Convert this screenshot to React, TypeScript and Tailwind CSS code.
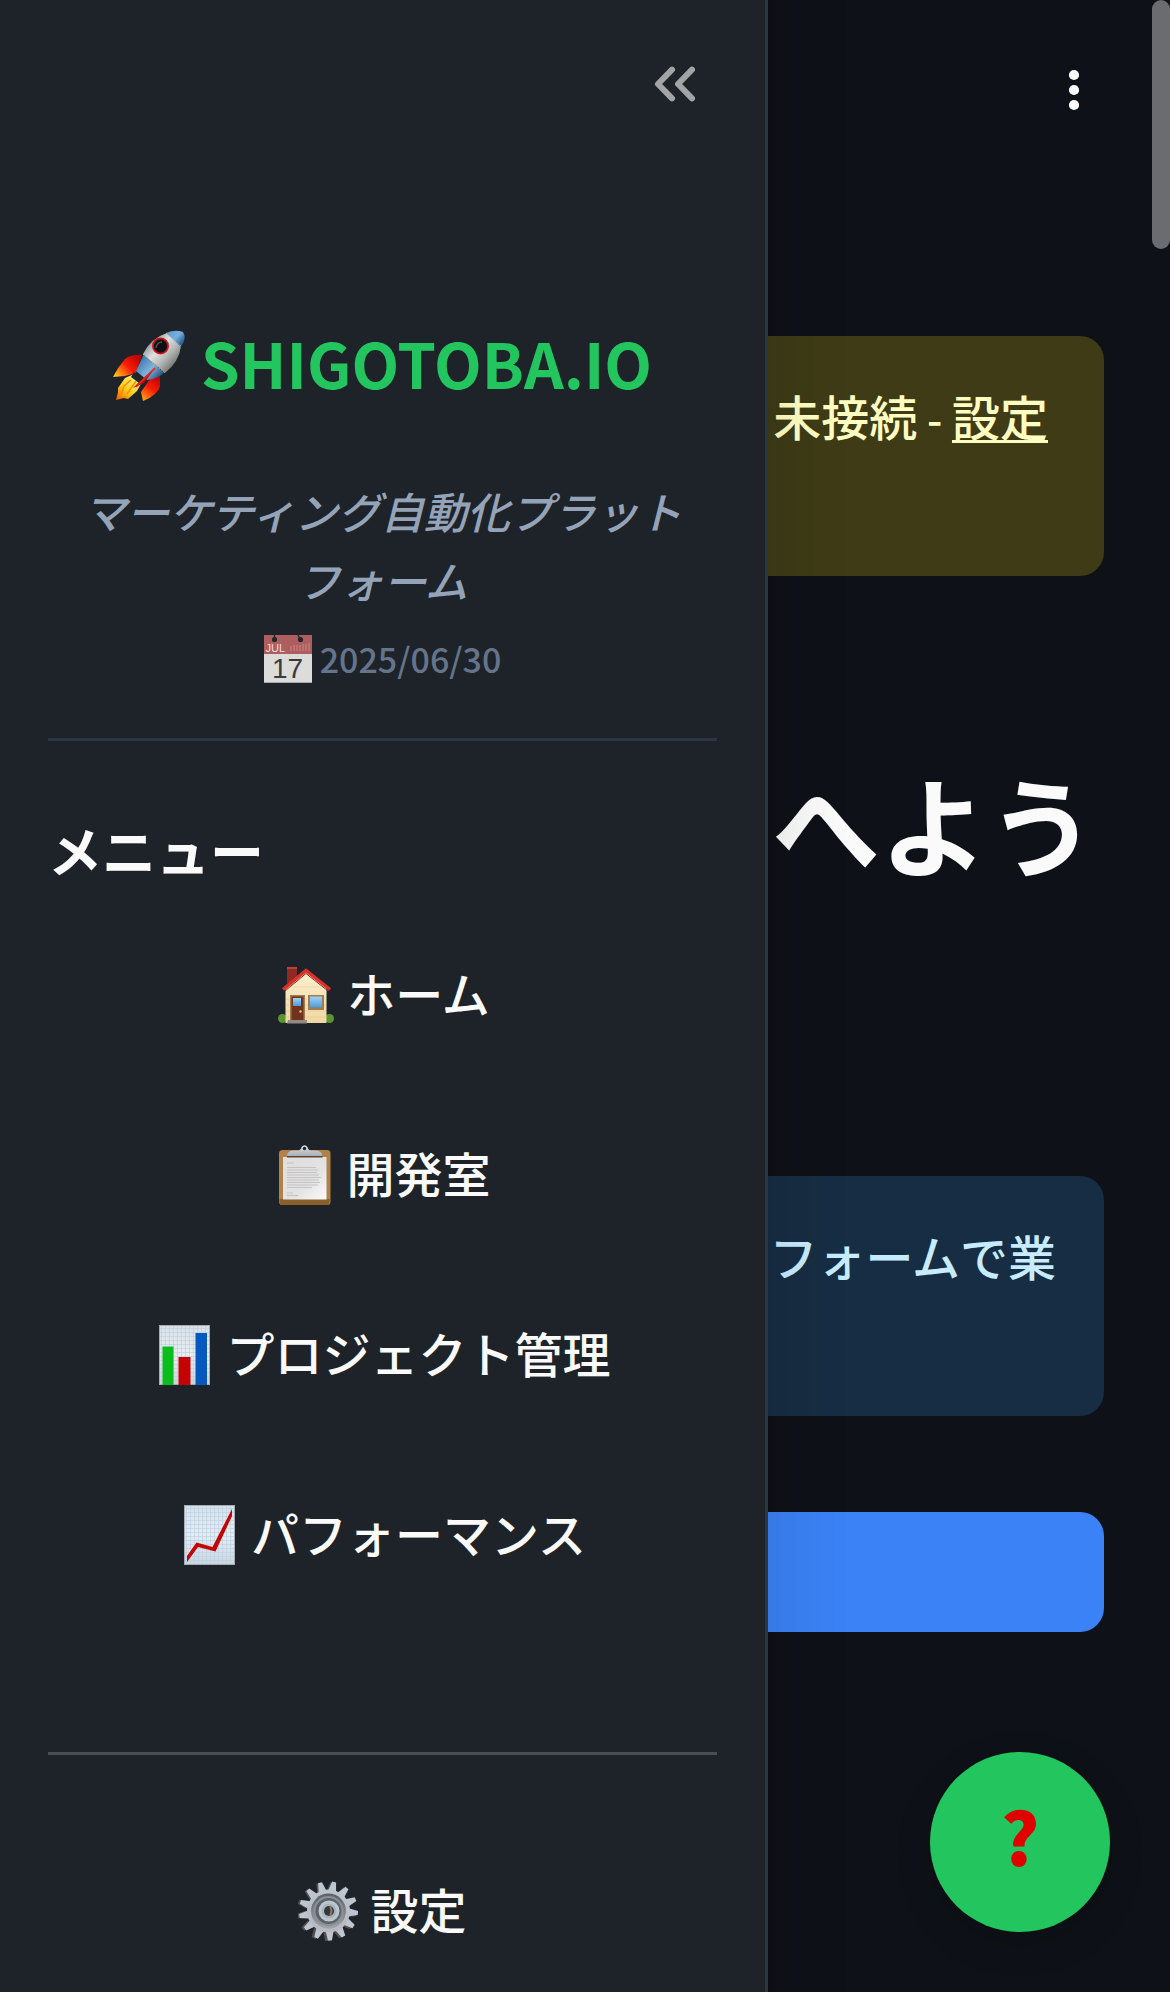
import React from "react";

function CollapseIcon() {
  return (
    <svg width="48" height="48" viewBox="0 0 48 48" fill="none" stroke="#a3a4a6" strokeWidth="6" strokeLinecap="round" strokeLinejoin="round" aria-hidden="true">
      <path d="M21 9.600 7 24l14 14.400M41 9.600 27 24l14 14.400" />
    </svg>
  );
}

function DotsIcon() {
  return (
    <svg width="48" height="48" viewBox="0 0 48 48" fill="#ffffff" aria-hidden="true">
      <circle cx="24" cy="9" r="5.1" />
      <circle cx="24" cy="24" r="5.1" />
      <circle cx="24" cy="39" r="5.1" />
    </svg>
  );
}

function RocketIcon() {
  return (
    <svg className="shrink-0" width="72" height="72" viewBox="0 0 72 72" aria-hidden="true">
      <defs>
        <linearGradient id="rk-body" x1="30" y1="18" x2="56" y2="42" gradientUnits="userSpaceOnUse">
          <stop offset="0" stopColor="#8c9296" />
          <stop offset=".35" stopColor="#dfe2e0" />
          <stop offset=".65" stopColor="#b5b9b8" />
          <stop offset="1" stopColor="#6f7370" />
        </linearGradient>
        <linearGradient id="rk-nose" x1="54" y1="2" x2="70" y2="16" gradientUnits="userSpaceOnUse">
          <stop offset="0" stopColor="#5f9bd0" />
          <stop offset=".5" stopColor="#77b0df" />
          <stop offset="1" stopColor="#15427a" />
        </linearGradient>
        <linearGradient id="rk-belly" x1="26" y1="30" x2="48" y2="50" gradientUnits="userSpaceOnUse">
          <stop offset="0" stopColor="#3d78ad" />
          <stop offset=".5" stopColor="#7fb4dd" />
          <stop offset="1" stopColor="#163d69" />
        </linearGradient>
        <linearGradient id="rk-fin" x1="26" y1="26" x2="4" y2="47" gradientUnits="userSpaceOnUse">
          <stop offset="0" stopColor="#b80000" />
          <stop offset=".5" stopColor="#fb1b05" />
          <stop offset="1" stopColor="#ffc31e" />
        </linearGradient>
        <linearGradient id="rk-fin2" x1="46" y1="46" x2="28" y2="70" gradientUnits="userSpaceOnUse">
          <stop offset="0" stopColor="#b80000" />
          <stop offset=".5" stopColor="#fb1b05" />
          <stop offset="1" stopColor="#ffb01e" />
        </linearGradient>
        <linearGradient id="rk-fire" x1="26" y1="46" x2="4" y2="70" gradientUnits="userSpaceOnUse">
          <stop offset="0" stopColor="#fff29a" />
          <stop offset=".55" stopColor="#ffd21c" />
          <stop offset="1" stopColor="#f05a00" />
        </linearGradient>
      </defs>
      <path d="M29 25q-10-1-17 4Q5 37 0 47l12-1 11-3z" fill="url(#rk-fin)" />
      <path d="m47 46 0 10q-2 9-17 15l-2-9 9-13z" fill="url(#rk-fin2)" />
      <path d="m21 44-9 4-7 10 0 4-2 8 8-2 4 1 9-8 6-11z" fill="url(#rk-fire)" />
      <path d="m18 50-7 6-3 9m15-14-9 13" stroke="#ff8a00" strokeWidth="1.4" fill="none" />
      <path d="m21 42 11 9-6 2-8-6z" fill="#22262b" />
      <path d="M31 24 23 41l11 9q10-1 17-7z" fill="url(#rk-belly)" />
      <path d="M30 24q8-16 24-21l14 13q-2 16-16 27z" fill="url(#rk-body)" />
      <path d="M53 3q9-4 17-1 4 6-2 15z" fill="url(#rk-nose)" />
      <path d="m30 24 22 19M53 3l15 13" stroke="#c9b880" strokeWidth="1" strokeDasharray="1.5 1.5" />
      <path d="M42 38 28 50l-8 8 11-5z" fill="#bd0803" />
      <path d="m42 38-9 9-10 10" stroke="#e8271b" strokeWidth="1.600" fill="none" />
      <circle cx="47.500" cy="16" r="8.500" fill="#d8101a" />
      <circle cx="47.500" cy="16" r="6.700" fill="#0c1013" />
      <path d="M43 18q1-6 6-6" stroke="#4c575c" strokeWidth="1.400" fill="none" />
    </svg>
  );
}

function CalendarIcon() {
  return (
    <svg className="shrink-0" width="48" height="48" viewBox="0 0 48 48" aria-hidden="true">
      <rect width="48" height="48" fill="#dcdcdb" />
      <rect width="48" height="19" fill="#ae5e5e" />
      <path d="M27 11v5m3-6v6m3-6v6m3-6v6m3-7v7m3-7v7m3-8v8" stroke="#c98583" strokeWidth="1" />
      <circle cx="10.500" cy="4.500" r="2.600" fill="#25262a" />
      <circle cx="36.500" cy="4.500" r="2.600" fill="#25262a" />
      <path d="M10.500 0v4M34 0l2 4" stroke="#25262a" strokeWidth="1.400" />
      <text x="1.500" y="16.500" fontSize="11" fill="#f3dede" fontFamily="Liberation Sans, sans-serif">JUL</text>
      <text x="23.500" y="43" fontSize="28" textAnchor="middle" fill="#393b3d" fontFamily="Liberation Sans, sans-serif">17</text>
      <path d="M0 47.500h48" stroke="#a9abaa" />
    </svg>
  );
}

function HomeIcon() {
  return (
    <svg className="shrink-0" width="60" height="60" viewBox="0 0 60 60" aria-hidden="true">
      <defs>
        <linearGradient id="hm-wall" x1="0" y1="0" x2="0" y2="1">
          <stop offset="0" stopColor="#fdf0ce" />
          <stop offset="1" stopColor="#efd7a2" />
        </linearGradient>
        <linearGradient id="hm-glass" x1="0" y1="0" x2="0" y2="1">
          <stop offset="0" stopColor="#9fd3f5" />
          <stop offset="1" stopColor="#4f9cd8" />
        </linearGradient>
      </defs>
      <path d="M12 2h10v10L12 19z" fill="#8e2a24" />
      <path d="M12 2h10v2H12z" fill="#b84138" />
      <circle cx="7.500" cy="53.500" r="4.500" fill="#5c9431" />
      <circle cx="54.500" cy="53.500" r="4.500" fill="#5c9431" />
      <path d="M10.500 22 31 6l20.500 16v36h-41z" fill="url(#hm-wall)" />
      <path d="M11 34h40M11 40h40M11 46h40M11 52h40M18 22h26" stroke="#e3cb97" strokeWidth=".6" />
      <path d="M8 24.500 31 5.500l24 19" stroke="#d8312b" strokeWidth="3.500" fill="none" />
      <path d="M10 26 31 8.500 53 26" stroke="#8d2320" strokeWidth="1" fill="none" />
      <path d="M15 30h15v26H15z" fill="#a07b53" />
      <path d="M16.500 31.500h12V56h-12z" fill="#713220" />
      <path d="M18 33h8v8h-8z" fill="url(#hm-glass)" />
      <circle cx="25.500" cy="46.500" r="1.200" fill="#f0c64a" />
      <path d="M33 30h16v15H33z" fill="#a07b53" />
      <path d="M35 31.500h12v11H35z" fill="url(#hm-glass)" />
      <path d="M13 55h19v3.500H12z" fill="#928b83" />
    </svg>
  );
}

function ClipboardIcon() {
  return (
    <svg className="shrink-0" width="60" height="60" viewBox="0 0 60 60" aria-hidden="true">
      <defs>
        <linearGradient id="cb-paper" x1="0" y1="0" x2="1" y2="1">
          <stop offset="0" stopColor="#dedede" />
          <stop offset=".6" stopColor="#e3e3e3" />
          <stop offset="1" stopColor="#fbfbfb" />
        </linearGradient>
        <linearGradient id="cb-clip" x1="0" y1="0" x2="0" y2="1">
          <stop offset="0" stopColor="#dbe0e5" />
          <stop offset="1" stopColor="#a9afb5" />
        </linearGradient>
      </defs>
      <rect x="5" y="5" width="51.500" height="55" rx="3.500" fill="#b0824a" />
      <path d="M5.500 54h50v3q0 3-3 3h-44q-3 0-3-3z" fill="#8a5f2b" />
      <path d="M9 12h43.500v42.500H9z" fill="url(#cb-paper)" />
      <path d="M13 18h7M13 22.500h29M13 25h31M13 27.500h30M13 30h32M13 32.500h34M13 35h32M13 37.500h33M13 40h31M13 42.500h25M13 48h6M13 50.500h11" stroke="#c2c2c2" strokeWidth="1" />
      <path d="M13 10.500h35.500v2H13z" fill="#5a4736" />
      <path d="M13 11q0-5 6-5.500h6q2-1 2.500-3.500 3-3.500 6 0 .5 2.500 2.500 3.500h6q6 .5 6.500 5.500z" fill="url(#cb-clip)" />
      <circle cx="30.500" cy="3.500" r="1.700" fill="#1e2329" />
    </svg>
  );
}

function ChartPaper({ id, children }: { id: string; children: React.ReactNode }) {
  return (
    <svg className="shrink-0" width="60" height="60" viewBox="0 0 60 60" aria-hidden="true">
      <defs>
        <linearGradient id={id} x1="0" y1="0" x2="0" y2="1">
          <stop offset="0" stopColor="#d9e1e6" />
          <stop offset=".5" stopColor="#e9edf0" />
          <stop offset="1" stopColor="#cdd4d9" />
        </linearGradient>
      </defs>
      <rect x="5" width="51" height="60" fill={`url(#${id})`} />
      <path d="M7.500 0v60M11.500 0v60M15.500 0v60M19.500 0v60M23.500 0v60M27.500 0v60M31.500 0v60M35.500 0v60M39.500 0v60M43.500 0v60M47.500 0v60M51.500 0v60M5 3.500h51M5 7.500h51M5 11.500h51M5 15.500h51M5 19.500h51M5 23.500h51M5 27.500h51M5 31.500h51M5 35.500h51M5 39.500h51M5 43.500h51M5 47.500h51M5 51.500h51M5 55.500h51" stroke="#b9d2e6" strokeWidth=".7" />
      <rect x="5.500" y=".5" width="50" height="59" fill="none" stroke="#a5adb3" />
      {children}
    </svg>
  );
}

function BarChartIcon() {
  return (
    <ChartPaper id="bar-paper">
      <path d="M8.500 21.500h11V60h-11z" fill="#08bd1c" />
      <path d="M24.500 32h12v28h-12z" fill="#c40404" />
      <path d="M41.500 8h11.500v52H41.500z" fill="#0758bd" />
    </ChartPaper>
  );
}

function TrendIcon() {
  return (
    <ChartPaper id="trend-paper">
      <path d="M8 51 17.500 37.500l16 4.500L53 4v7L36.500 46.500 19 42 8 57z" fill="#c40404" />
    </ChartPaper>
  );
}

const teeth = Array.from({ length: 13 }, (_, i) => (i * 360) / 13 + 12);

function GearIcon() {
  return (
    <svg className="shrink-0" width="60" height="60" viewBox="0 0 60 60" aria-hidden="true">
      <defs>
        <linearGradient id="gr-face" x1="0" y1="0" x2="0" y2="60" gradientUnits="userSpaceOnUse">
          <stop offset="0" stopColor="#bcc8d2" />
          <stop offset="1" stopColor="#b7b5bd" />
        </linearGradient>
        <linearGradient id="gr-ring" x1="0" y1="0" x2="0" y2="1">
          <stop offset="0" stopColor="#5b6167" />
          <stop offset="1" stopColor="#9fa4a9" />
        </linearGradient>
      </defs>
      <g fill="#57504d">
        {teeth.map((angle) => (
          <path key={angle} d="M26 10 27.800.500h4.400L34 10z" transform={`translate(-1.500 .5) rotate(${angle} 30 30)`} />
        ))}
      </g>
      <g fill="url(#gr-face)">
        {teeth.map((angle) => (
          <path key={angle} d="M26 10 28 .500h4L34 10z" transform={`rotate(${angle} 30.500 30)`} />
        ))}
        <circle cx="30.500" cy="30" r="21.500" />
      </g>
      <circle cx="30.500" cy="30" r="17.500" fill="url(#gr-ring)" />
      <circle cx="30.500" cy="30" r="15" fill="#8a9197" />
      <circle cx="30.500" cy="30" r="13" fill="#5d636a" />
      <circle cx="31" cy="30" r="10.500" fill="#bcc6ce" />
      <circle cx="31" cy="30" r="7.500" fill="#a9b2b9" />
      <circle cx="31" cy="30" r="5" fill="#34383b" />
      <path d="M32 25.500q3 4 0 9" stroke="#8d7b6b" strokeWidth="2" fill="none" />
    </svg>
  );
}

function NavButton({ icon, label }: { icon: React.ReactNode; label: string }) {
  return (
    <button type="button" className="flex h-[120px] w-full items-center justify-center gap-3 text-5xl font-medium">
      {icon}
      <span className="pb-1.5">{label}</span>
    </button>
  );
}

export default function App() {
  return (
    <div lang="ja" className="relative flex min-h-screen overflow-hidden bg-[#0e1117] font-['Noto_Sans_CJK_JP',sans-serif] text-[#fafafa]">
      <aside className="relative z-10 w-[768px] shrink-0 border-r-[3px] border-[#2b3543] bg-[#1e2329] px-12 pt-[60px] shadow-[-96px_0_80px_96px_rgba(0,0,0,0.14)]">
        <div className="flex justify-end pr-[18px]">
          <button type="button" aria-label="サイドバーを閉じる">
            <CollapseIcon />
          </button>
        </div>

        <div className="mt-[204px] flex flex-col items-center px-6 text-center">
          <h1 className="flex items-center gap-4 text-[62px] leading-[100px] font-bold text-[#22c55e]">
            <RocketIcon />
            <span className="pb-2">SHIGOTOBA.IO</span>
          </h1>
          <p className="mt-14 text-[43px] leading-[69px] font-medium text-[#94a3b8] italic">
            マーケティング自動化プラットフォーム
          </p>
          <p className="mt-[11px] flex items-center gap-2 text-[34px] leading-[68px] font-medium text-[#64748b]">
            <CalendarIcon />
            2025/06/30
          </p>
        </div>

        <hr className="mt-[45px] border-t-[3px] border-[#2b3543]" />
        <h2 className="mt-[69px] text-[54px] leading-[80px] font-bold">メニュー</h2>

        <nav aria-label="メニュー" className="mt-[45px] flex flex-col gap-[60px]">
          <NavButton icon={<HomeIcon />} label="ホーム" />
          <NavButton icon={<ClipboardIcon />} label="開発室" />
          <NavButton icon={<BarChartIcon />} label="プロジェクト管理" />
          <NavButton icon={<TrendIcon />} label="パフォーマンス" />
        </nav>

        <hr className="mt-[157px] mb-24 border-t-[3px] border-[#4a4e53]" />
        <NavButton icon={<GearIcon />} label="設定" />
      </aside>

      <main className="min-w-0 flex-1 pt-[66px] pr-[66px] text-5xl leading-[72px] font-medium">
        <div className="flex justify-end pr-[6px]">
          <button type="button" aria-label="メニューを開く">
            <DotsIcon />
          </button>
        </div>

        <div className="mt-[222px] h-[240px] rounded-r-3xl bg-[#3e3b16] pt-[43px] pr-14 text-right whitespace-nowrap text-[#ffffc2]">
          未接続<span className="text-[43px]"> - </span>
          <a href="#settings" className="underline decoration-[3px] underline-offset-[4px]">設定</a>
        </div>

        <h2 className="mt-[181px] pr-2 text-right text-[108px] leading-[130px] font-bold whitespace-nowrap">へよう</h2>

        <div className="mt-[289px] h-[240px] rounded-r-3xl bg-[#172d43] pt-[43px] pr-12 text-right whitespace-nowrap text-[#c7ebff]">
          フォームで業
        </div>

        <button type="button" aria-label="開始" className="mt-24 block h-[120px] w-full rounded-r-3xl bg-[#3b82f6]" />
      </main>

      <button
        type="button"
        aria-label="ヘルプ"
        className="absolute right-[60px] bottom-[60px] z-20 flex size-[180px] items-center justify-center rounded-full bg-[#22c55e] pb-3.5 text-7xl leading-none font-black text-[#e00000] shadow-[0_12px_36px_rgba(0,0,0,0.15)]"
      >
        ?
      </button>

      <div className="absolute top-0 right-0 z-20 h-[249px] w-[18px] rounded-full bg-[#6b6c70]" />
    </div>
  );
}
